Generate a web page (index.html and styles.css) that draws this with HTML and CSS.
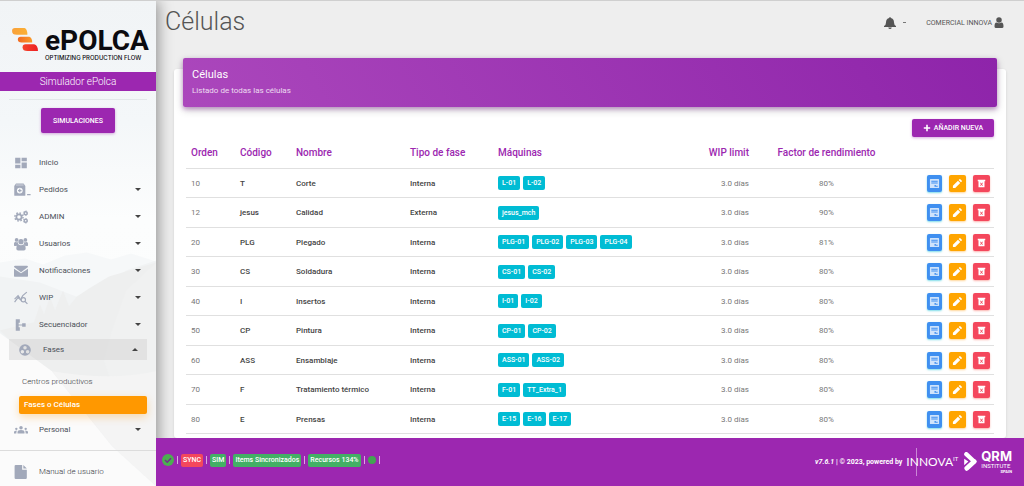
FILE: index.html
```html
<!DOCTYPE html>
<html lang="es">
<head>
<meta charset="utf-8">
<title>ePOLCA - Células</title>
<meta name="viewport" content="width=device-width, initial-scale=1">
<link rel="stylesheet" href="styles.css">
</head>
<body>
<svg class="symbols" aria-hidden="true">
  <symbol id="i-card" viewBox="0 0 24 24"><path fill-rule="evenodd" d="M3 2h18q1 0 1 1v18q0 1-1 1H3q-1 0-1-1V3q0-1 1-1zM5 6v2h14V6zM5 10v2h14v-2zM12 15v4h7v-2h-4v-2z"/></symbol>
  <symbol id="i-pencil" viewBox="0 0 24 24"><path d="M2 17V22h5L18 11l-5-5zM21 8c1-1 1-1.500 0-2.500l-2.500-2.500c-1-1-1.500-1-2.500 0l-1.500 1.500 5 5z"/></symbol>
  <symbol id="i-trash" viewBox="0 0 24 24"><path fill-rule="evenodd" d="M2 2h20v4h-2v16H4V6H2zM8 10l2.500 4L8 18h2.500l1.500-2.500 1.500 2.500H16l-2.500-4L16 10h-2.500L12 12.500 10.500 10z"/></symbol>
</svg>
<div class="app">
  <aside class="sidebar">
    <svg class="scenery" viewBox="0 0 156 486" preserveAspectRatio="none" aria-hidden="true">
      <path d="M0 262l25-4 18 6 22-9 22-3 24 7 20-6 25 8v225H0z" fill="#f6f8f9"/>
      <path d="M0 276l40 6 36 14 26-10 24-16 30-10v226H0z" fill="#f1f3f4"/>
      <path d="M0 330l34-8 6-18 4 10 6-18 5 14 8-20 6 16 8-10 12-8 20-12 47-14v224z" fill="#eeefef"/>
      <path d="M156 262l-30 28-14 40-8 30 20 60 32 50z" fill="#f0f1f1"/>
      <path d="M0 333l52 38 60 75 44 40H0z" fill="#fbfbfb"/>
      <path d="M52 371q60 10 104 0v115l-44-40z" fill="#f4f4f4"/>
    </svg>
    <a class="brand" href="#">
      <svg class="brand-mark" viewBox="0 0 28 25" aria-hidden="true">
        <defs>
          <linearGradient id="g1"><stop offset="0" stop-color="#f9a13a"/><stop offset="1" stop-color="#fbb034"/></linearGradient>
          <linearGradient id="g2"><stop offset="0" stop-color="#f26a22"/><stop offset="1" stop-color="#fa9a28"/></linearGradient>
          <linearGradient id="g3"><stop offset="0" stop-color="#f5452a"/><stop offset="1" stop-color="#ed2024"/></linearGradient>
        </defs>
        <path d="M3 0H13Q16 1 16 7H5Q0 7 0 3Q0 0 3 0z" fill="url(#g1)"/>
        <path d="M9 9H18Q21 10 21 15H10Q6 15 6 12Q6 9 9 9z" fill="url(#g2)"/>
        <path d="M14 17H23Q27 18 27 24H16Q11 24 11 20Q11 17 14 17z" fill="url(#g3)"/>
      </svg>
      <span class="brand-text"><span class="brand-name">ePOLCA</span><span class="brand-tag">OPTIMIZING PRODUCTION FLOW</span></span>
    </a>
    <div class="ribbon">Simulador ePolca</div>
    <div class="launch"><button class="btn btn-sim" type="button">SIMULACIONES</button></div>
    <nav class="menu">
      <a class="item" href="#"><svg class="ico" viewBox="0 0 24 24"><path d="M2 3h9v10H2zM2 15h9v6H2zM13 3h9v6h-9zM13 11h9v10h-9z"/></svg>Inicio</a>
      <a class="item" href="#"><svg class="ico ico-wide" viewBox="0 0 30 24"><path fill-rule="evenodd" d="M3 1h13l3 4v16q0 1-1 1H1q-1 0-1-1V5zM3 3v1h13V3zM9.500 8a5 5 0 1 0 0 10a5 5 0 1 0 0-10zM8.500 10h2v2h2v2h-2v2h-2v-2h-2v-2h2zM22 19h6v2h-6z"/></svg>Pedidos<span class="caret"></span></a>
      <a class="item" href="#"><svg class="ico" viewBox="0 0 24 24"><g fill="none" stroke="#a2a9ba"><circle cx="8.500" cy="12" r="4.500" stroke-width="3"/><circle cx="8.500" cy="12" r="7" stroke-width="2.500" stroke-dasharray="2.750 2.750"/><circle cx="20" cy="5.500" r="2.600" stroke-width="2.500"/><circle cx="20" cy="18.500" r="2.600" stroke-width="2.500"/><circle cx="20" cy="5.500" r="4" stroke-width="1.500" stroke-dasharray="2 2.200"/><circle cx="20" cy="18.500" r="4" stroke-width="1.500" stroke-dasharray="2 2.200"/></g></svg>ADMIN<span class="caret"></span></a>
      <a class="item" href="#"><svg class="ico" viewBox="0 0 24 24"><circle cx="4.500" cy="5" r="3.200"/><circle cx="19.500" cy="5" r="3.200"/><circle cx="12" cy="8" r="4.500"/><path d="M0 14V11q0-3 3-2.500 2 1 3.500 0 0 3 1.500 5-3 0-4 2H2q-2 0-2-1.500zM24 14V11q0-3-3-2.500-2 1-3.500 0 0 3-1.500 5 3 0 4 2h2q2 0 2-1.500zM4 20q0-7 4-7 4 2 8 0 4 0 4 7 0 3-3 3H7q-3 0-3-3z"/></svg>Usuarios<span class="caret"></span></a>
      <a class="item" href="#"><svg class="ico" viewBox="0 0 24 24"><path d="M2 3h20q2 0 2 2L12 14 0 5q0-2 2-2zM0 8l12 8 12-8v12q0 2-2 2H2q-2 0-2-2z"/></svg>Notificaciones<span class="caret"></span></a>
      <a class="item" href="#"><svg class="ico" viewBox="0 0 24 24"><path d="M1 19l6-8 4 4 4-7 7-6M1 14l6-6 3 4M19 18l4 4" fill="none" stroke="#a2a9ba" stroke-width="2"/><circle cx="16" cy="15" r="3.700" fill="none" stroke="#a2a9ba" stroke-width="2"/></svg>WIP<span class="caret"></span></a>
      <a class="item" href="#"><svg class="ico" viewBox="0 0 24 24"><path d="M3 2h7v6H8v3h6V9h6v6h-6v-2H8v3h2v6H3z"/></svg>Secuenciador<span class="caret"></span></a>
      <a class="item item-open" href="#"><svg class="ico" viewBox="0 0 24 24"><path fill-rule="evenodd" d="M12 2a10 10 0 1 0 0 20a10 10 0 1 0 0-20zM12 5a3 3 0 1 1 0 6a3 3 0 1 1 0-6zM7.500 12a3 3 0 1 1 0 6a3 3 0 1 1 0-6zM16.500 12a3 3 0 1 1 0 6a3 3 0 1 1 0-6z"/></svg>Fases<span class="caret caret-up"></span></a>
      <div class="submenu">
        <a class="sub" href="#">Centros productivos</a>
        <a class="sub sub-active" href="#">Fases o Células</a>
      </div>
      <a class="item" href="#"><svg class="ico" viewBox="0 0 24 24"><circle cx="12" cy="8" r="3"/><circle cx="4" cy="10" r="2"/><circle cx="20" cy="10" r="2"/><path d="M6 18v-2q0-4 6-4t6 4v2zM0 18v-2q0-3 5-3-1 2-1 5zM24 18v-2q0-3-5-3 1 2 1 5z"/></svg>Personal<span class="caret"></span></a>
    </nav>
    <div class="manual"><a class="item" href="#"><svg class="ico" viewBox="0 0 24 24"><path d="M3 0h11v8h8v14q0 2-2 2H3q-2 0-2-2V2q0-2 2-2zM16 0l6 6h-6z"/></svg>Manual de usuario</a></div>
  </aside>

  <div class="main">
    <header class="topbar">
      <h1>Células</h1>
      <div class="tools">
        <button class="bell" type="button" aria-label="Avisos"><svg viewBox="0 0 24 24"><path d="M12 0q1.500 0 1.500 2Q20 3.500 20 11q0 5 4 7v2H0v-2q4-2 4-7 0-7.500 6.500-9Q10.500 0 12 0zM8.500 21h7q-.5 3-3.500 3t-3.500-3z"/></svg><span class="tick"></span></button>
        <a class="account" href="#">COMERCIAL INNOVA<svg viewBox="0 0 20 22"><circle cx="10" cy="6" r="5.500"/><path d="M1 19q0-8 4-8 5 3 10 0 4 0 4 8 0 3-3 3H4q-3 0-3-3z"/></svg></a>
      </div>
    </header>
    <main class="content">
      <section class="card">
        <div class="card-head"><h2>Células</h2><p>Listado de todas las células</p></div>
        <div class="actions"><button class="btn btn-add" type="button"><svg viewBox="0 0 10 10"><path d="M4 1h2v3h3v2H6v3H4V6H1V4h3z"/></svg>AÑADIR NUEVA</button></div>
        <table>
          <colgroup><col class="c1"><col class="c2"><col class="c3"><col class="c4"><col><col class="c6"><col class="c7"><col class="c8"></colgroup>
          <thead><tr><th>Orden</th><th>Código</th><th>Nombre</th><th>Tipo de fase</th><th>Máquinas</th><th class="right">WIP limit</th><th class="center">Factor de rendimiento</th><th></th></tr></thead>
          <tbody id="rows"></tbody>
        </table>
      </section>
    </main>
    <footer class="footer">
      <div class="status">
        <svg class="ok" viewBox="0 0 24 24"><circle cx="12" cy="12" r="12" fill="#4caf50"/><path d="M6 12l4.500 4.500L18 8.500" fill="none" stroke="#74308c" stroke-width="3"/></svg><i></i>
        <span class="tag tag-red">SYNC</span><i></i><span class="tag">SIM</span><i></i><span class="tag">Items Sincronizados</span><i></i><span class="tag">Recursos 134%</span><i></i><span class="dot"></span><i></i>
      </div>
      <div class="credits">
        <span><em>v7.6.1</em> | © 2023, powered by</span>
        <span class="innova">INNOVA<sup>IT</sup></span>
        <span class="qrm"><svg viewBox="0 0 24 36"><path d="M4 4L19 18" fill="none" stroke="#fff" stroke-width="8" stroke-linecap="round"/><path d="M19 18L5 31" fill="none" stroke="#fff" stroke-width="9" stroke-linecap="round"/><path d="M0 13l8 5-8 7z"/></svg><span class="qrm-text"><b>QRM</b><span>INSTITUTE</span><small>SPAIN</small></span></span>
      </div>
    </footer>
  </div>
</div>
<script src="app.js"></script>
</body>
</html>
```
FILE: styles.css
```css
* { box-sizing: border-box; }
body { margin: 0; font-family: Roboto, "Liberation Sans", sans-serif; font-size: 8px; color: #333; background: #eee; }
a { color: inherit; text-decoration: none; }
button { font-family: inherit; border: 0; margin: 0; padding: 0; color: inherit; background: none; cursor: pointer; }
h1, h2, p { margin: 0; font-weight: 400; }
svg { display: block; flex: none; }
.symbols { position: absolute; width: 0; height: 0; }
.app { display: grid; grid-template-columns: 156px minmax(0, 1fr); height: 100vh; border-top: 1px solid #cfcfcf; overflow: hidden; }

.sidebar { position: relative; z-index: 2; display: flex; flex-direction: column; background: linear-gradient(#f1f4f6, #f4f7f9 25%, #fcfdfd 45%, #fafbfb); box-shadow: 2px 0 14px rgba(0,0,0,.4); }
.scenery { position: absolute; inset: 0; width: 100%; height: 100%; z-index: -1; }
.brand { display: flex; align-items: flex-start; gap: 6px; height: 71px; padding: 27px 8px 0 12px; color: #0b0b0f; }
.brand-mark { width: 27px; height: 24px; }
.brand-text { display: flex; flex-direction: column; }
.brand-name { font: 700 28px/25px Roboto, sans-serif; }
.brand-tag { font: 500 6px/10px Inter, sans-serif; white-space: nowrap; }
.ribbon { height: 19px; line-height: 19px; text-align: center; font-size: 10px; font-weight: 300; color: #fff; background: #9c27b0; }
.launch { margin: 8px 9px 0; padding-top: 8px; border-top: 1px solid #e3e7ea; display: flex; justify-content: center; }
.btn { color: #fff; background: #9c27b0; border-radius: 2px; font-weight: 500; box-shadow: 0 1px 3px rgba(156,39,176,.4); }
.btn-sim { width: 74px; height: 25px; font-size: 7px; }
.menu { padding-top: 16px; }
.item { display: flex; align-items: center; height: 27px; padding: 0 15px 0 14px; color: #4b4f58; }
.ico { width: 14px; height: 14px; margin-right: 11px; fill: #a2a9ba; }
.ico-wide { width: 18px; margin-right: 7px; }
.caret { margin-left: auto; border: 3px solid transparent; border-top: 3px solid #444; border-bottom: 0; }
.caret-up { border-top: 0; border-bottom: 3px solid #444; }
.item-open { height: 21px; margin: 1px 9px 0; padding: 0 9px; background: rgba(205,205,205,.4); }
.submenu { padding: 13px 9px 2px 19px; }
.sub { display: block; height: 18px; line-height: 18px; padding-left: 3px; font-size: 8px; font-weight: 300; color: #33363c; }
.sub-active { margin-top: 5px; padding-left: 5px; border-radius: 2px; font-weight: 500; color: #fff; background: #ff9800; box-shadow: 0 3px 8px rgba(255,152,0,.3); }
.manual { margin-top: 7px; padding-top: 7px; border-top: 1px solid #dcdcdc; font-weight: 300; }
.manual .item { color: #33363c; }

.main { display: grid; grid-template-rows: auto minmax(0, 1fr) auto; min-width: 0; }
.topbar { display: flex; justify-content: space-between; align-items: center; height: 42px; padding: 0 20px 0 9px; }
h1 { font-size: 25px; font-weight: 300; line-height: 28px; color: #555; }
.tools { display: flex; align-items: center; gap: 20px; color: #555; fill: #555; padding-top: 1px; }
.bell { display: flex; align-items: center; gap: 7px; }
.bell svg { width: 12px; height: 12px; fill: #555; }
.tick { width: 3px; height: 1px; background: #777; }
.account { display: flex; align-items: center; gap: 2px; font-size: 7px; }
.account svg { width: 10px; height: 11px; }

.content { padding: 26px 18px 0; overflow: hidden; }
.card { min-height: 100%; padding: 0 9px; background: #fff; border-radius: 3px; box-shadow: 0 1px 3px rgba(0,0,0,.12); }
.card-head { position: relative; top: -11px; height: 49px; padding: 10px 9px; color: #fff; border-radius: 2px; background: linear-gradient(60deg, #ab47bc, #8e24aa); box-shadow: 0 3px 9px rgba(0,0,0,.2), 0 2px 4px rgba(156,39,176,.4); }
h2 { font-size: 11px; line-height: 14px; }
.card-head p { margin-top: 4px; font-size: 8px; line-height: 10px; opacity: .8; }
.actions { display: flex; justify-content: flex-end; padding: 1px 3px 0; }
.btn-add { display: flex; align-items: center; justify-content: center; gap: 3px; width: 82px; height: 18px; font-size: 7px; }
.btn-add svg { width: 8px; height: 8px; fill: #fff; }
table { width: calc(100% - 6px); margin: 0 3px; table-layout: fixed; border-collapse: separate; border-spacing: 0; font-size: 8px; }
.c1 { width: 49px; } .c2 { width: 56px; } .c3 { width: 114px; } .c4 { width: 88px; }
.c6 { width: 60px; } .c7 { width: 145px; } .c8 { width: 95px; }
th, td { padding: 0 5px; text-align: left; border-bottom: 1px solid #e0e0e0; white-space: nowrap; font-weight: 400; }
th { height: 32px; font-size: 10px; font-weight: 500; color: #9c27b0; }
td { height: 29px; color: #777; }
tr:nth-child(even) td { height: 30px; }
td.name { color: #444; font-weight: 500; }
td:last-child { padding-right: 4px; }
.right { text-align: right; }
.center { text-align: center; }
.chips { display: flex; gap: 3px; }
.chip { height: 14px; padding: 0 4px; line-height: 14px; font-size: 7px; font-weight: 500; color: #fff; background: #00bcd4; border-radius: 2px; }
.buttons { display: flex; justify-content: flex-end; }
.act { display: grid; place-items: center; width: 17px; height: 17px; border-radius: 2px; }
.act svg { width: 11px; height: 11px; fill: #fff; }
.act.view { width: 15px; margin-right: 7px; background: #3f8ff0; box-shadow: 0 1px 2px rgba(0,188,212,.5); }
.act.view svg { fill: #cfe3fb; }
.act.edit { margin-right: 7px; background: #ffa500; box-shadow: 0 1px 2px rgba(255,152,0,.4); }
.act.del { background: #f4475c; box-shadow: 0 1px 2px rgba(244,67,54,.4); }
.act.del svg { width: 9px; height: 9px; }

.footer { position: relative; z-index: 3; display: flex; align-items: center; justify-content: space-between; height: 48px; padding: 0 12px 4px 6px; color: #fff; background: #9c27b0; }
.status { display: flex; align-items: center; gap: 2px; }
.status i { width: 1px; height: 8px; margin: 0 1px; background: #d9a8e2; }
.ok { width: 12px; height: 12px; }
.tag { height: 13px; padding: 0 2px; line-height: 13px; font-size: 7px; font-weight: 500; border-radius: 2px; background: #43b065; }
.tag-red { background: #f4475c; }
.dot { width: 8px; height: 8px; border-radius: 50%; background: #43a552; }
.credits { display: flex; align-items: center; gap: 4px; font-size: 7px; font-weight: 700; padding-top: 3px; }
.innova { display: flex; align-items: flex-start; font: 400 12px/28px Lato, sans-serif; background: linear-gradient(#c987d5, #c987d5) 10px 0 / 1px 28px no-repeat; }
.innova sup { font-size: 6px; line-height: 22px; vertical-align: top; }
.qrm { display: flex; align-items: center; gap: 4px; margin-left: 2px; }
.qrm svg { width: 13px; height: 19px; fill: #fff; }
.qrm-text { display: flex; flex-direction: column; font: 400 6px/7px Roboto, sans-serif; }
.qrm-text b { font: 700 13px/12px Inter, sans-serif; }
.qrm-text small { font-size: 4px; line-height: 5px; font-weight: 700; text-align: right; }
```
FILE: app.js
```javascript
const cells = [
  [10, "T", "Corte", "Interna", ["L-01", "L-02"], "80%"],
  [12, "jesus", "Calidad", "Externa", ["jesus_mch"], "90%"],
  [20, "PLG", "Plegado", "Interna", ["PLG-01", "PLG-02", "PLG-03", "PLG-04"], "81%"],
  [30, "CS", "Soldadura", "Interna", ["CS-01", "CS-02"], "80%"],
  [40, "I", "Insertos", "Interna", ["I-01", "I-02"], "80%"],
  [50, "CP", "Pintura", "Interna", ["CP-01", "CP-02"], "80%"],
  [60, "ASS", "Ensamblaje", "Interna", ["ASS-01", "ASS-02"], "80%"],
  [70, "F", "Tratamiento térmico", "Interna", ["F-01", "TT_Extra_1"], "80%"],
  [80, "E", "Prensas", "Interna", ["E-15", "E-16", "E-17"], "80%"]
];
const action = (cls, icon, label) =>
  `<button class="act ${cls}" type="button" aria-label="${label}"><svg><use href="#${icon}"/></svg></button>`;
document.getElementById("rows").innerHTML = cells.map(([order, code, name, type, machines, factor]) => `
  <tr><td>${order}</td><td class="name">${code}</td><td class="name">${name}</td><td class="name">${type}</td>
  <td><div class="chips">${machines.map(m => `<span class="chip">${m}</span>`).join("")}</div></td>
  <td class="right">3.0 días</td><td class="center">${factor}</td>
  <td><div class="buttons">${action("view", "i-card", "Ver")}${action("edit", "i-pencil", "Editar")}${action("del", "i-trash", "Eliminar")}</div></td></tr>`).join("");
```
